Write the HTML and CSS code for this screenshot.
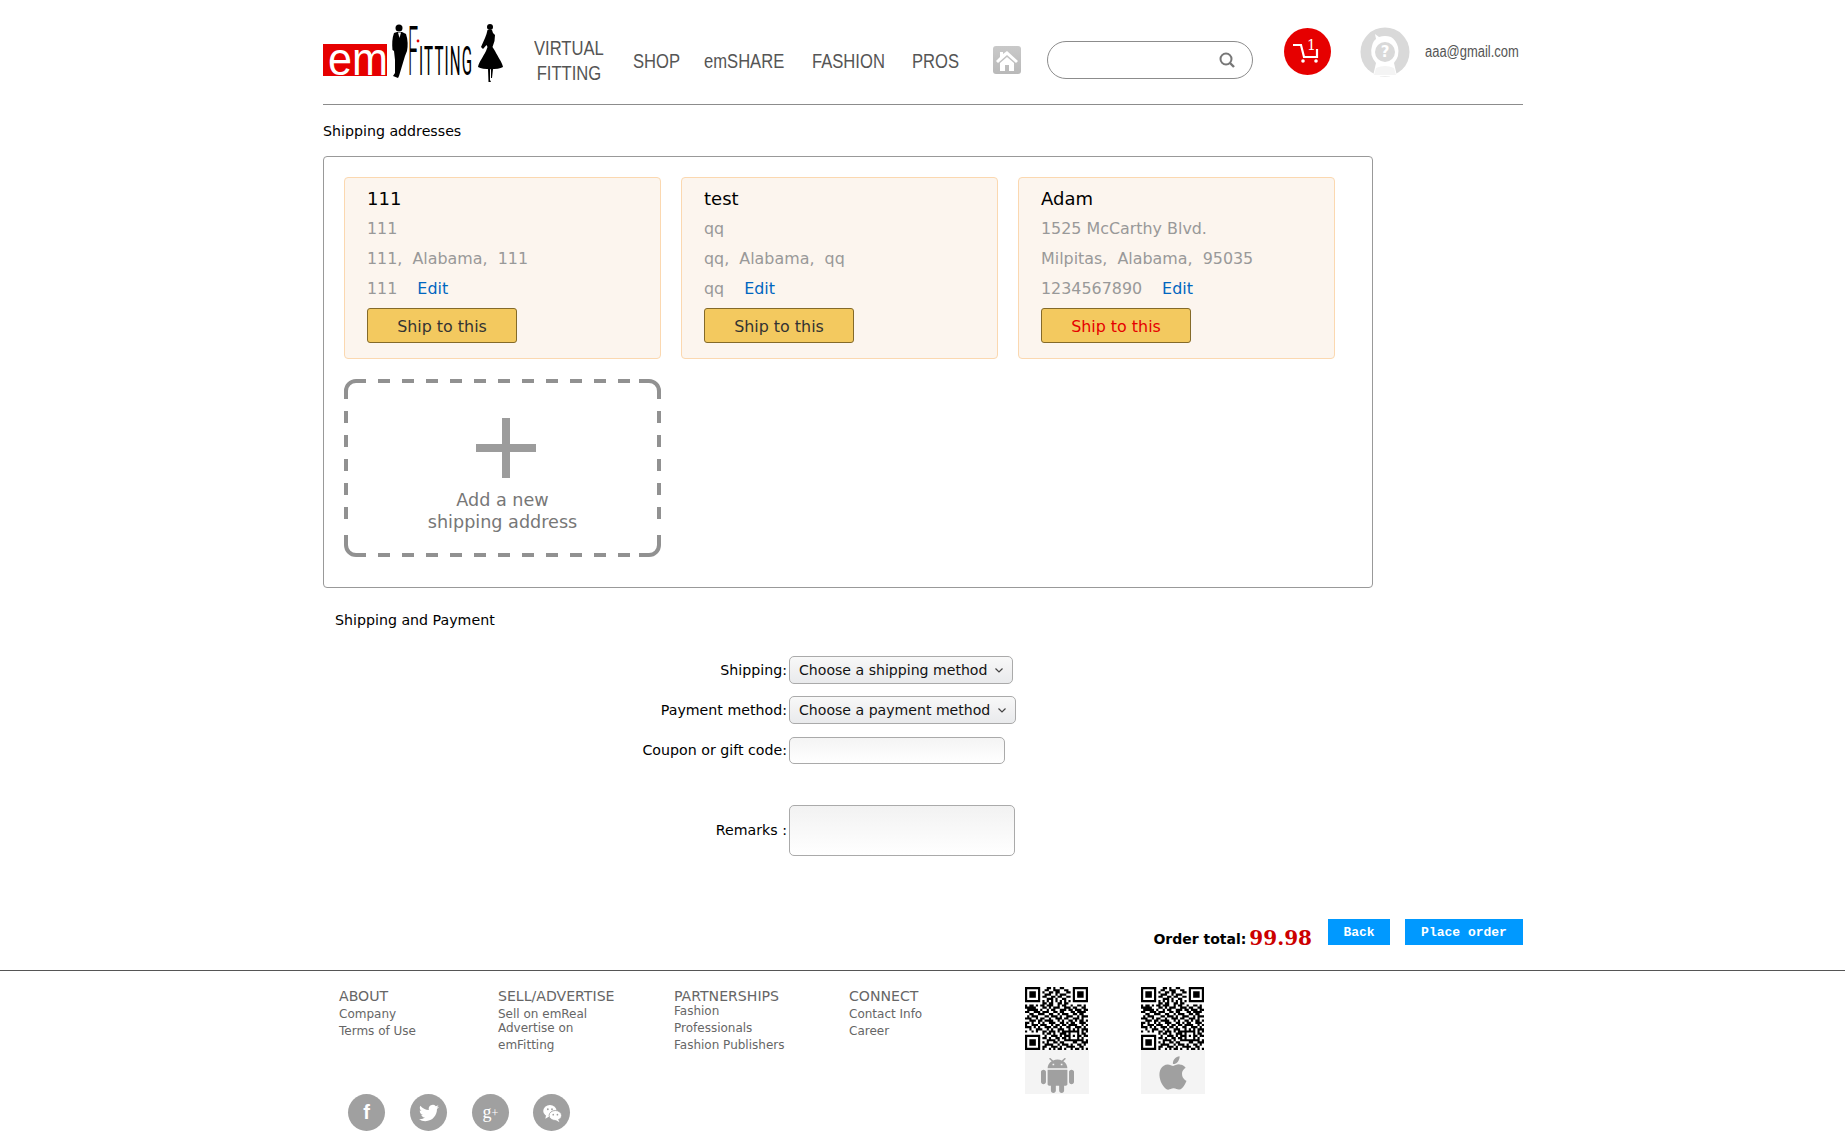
FILE: index.html
```html
<!DOCTYPE html>
<html lang="en">
<head>
    <meta charset="UTF-8">
    <meta name="viewport" content="width=device-width, initial-scale=1.0">
    <title>emFitting - Checkout</title>
    <link rel="stylesheet" href="styles.css">
</head>
<body>
    <svg class="defs" width="0" height="0">
        <symbol id="qr" viewBox="0 0 29 29"><path id="qrPath" d=""/></symbol>
    </svg>

    <div class="page">
        <header class="header">
            <a class="logo" href="#">
                <svg width="180" height="70" viewBox="0 0 180 70">
                    <rect x="0" y="24" width="64" height="32" fill="#e60000"/>
                    <text class="logo-em" x="5" y="55" textLength="60" lengthAdjust="spacingAndGlyphs">em</text>
                    <circle cx="76" cy="8" r="3.5"/>
                    <path d="M71 13L74 12L79 12L83 14C85 20 85 26 84 31L82 36L79 46L76 56L75 58L70 56L72 53L72 40L71 31L69.5 30C69 24 69 18 71 13Z"/>
                    <path d="M75 12.5L78 12.5L76.5 18Z" fill="#fff"/>
                    <text class="logo-f" transform="translate(85 55) scale(.26 1)">F</text>
                    <circle cx="95" cy="21" r="1.4" fill="#e60000"/>
                    <text class="logo-itting" transform="translate(96 55) scale(.38 1)">ITTING</text>
                    <circle cx="167" cy="7" r="3"/>
                    <path d="M164.5 10L169 10L170 13L172 15L171.5 21L169.5 27L172 31C175 37 179 42 180 47C175 50 160 50 155 47C156 42 160 37 163 31L164.5 27L163.5 25L160 29L158 27L162 18L163.5 14Z"/>
                    <path d="M165 49L167 49L167 60L168 62L165.5 62ZM168 49L170 49L169 58L168 58Z"/>
                </svg>
            </a>
            <nav class="nav">
                <a class="nav-wide" href="#"><span>VIRTUAL<br>FITTING</span></a>
                <a href="#"><span>SHOP</span></a>
                <a href="#"><span>emSHARE</span></a>
                <a href="#"><span>FASHION</span></a>
                <a href="#"><span>PROS</span></a>
            </nav>
            <a class="home" href="#">
                <svg width="28" height="28" viewBox="0 0 28 28">
                    <path d="M14 5L25 15L23 17L14 9L5 17L3 15L7 11L7 6L10 6L10 8Z" fill="#fff"/>
                    <path d="M7 17L14 11L21 17L21 25L16 25L16 19L12 19L12 25L7 25Z" fill="#fff"/>
                </svg>
            </a>
            <div class="search">
                <svg width="18" height="18" viewBox="0 0 18 18">
                    <circle cx="8" cy="8" r="5.5" fill="none" stroke="#777" stroke-width="2"/>
                    <path d="M12 12L16 16" stroke="#777" stroke-width="2.4"/>
                </svg>
            </div>
            <a class="cart" href="#">
                <svg width="47" height="47" viewBox="0 0 47 47">
                    <circle cx="23.5" cy="23.5" r="23.5" fill="#e60000"/>
                    <path d="M9 17L17 17L20 29L33 29L33 21" fill="none" stroke="#fff" stroke-width="2.2"/>
                    <circle cx="19" cy="33" r="1.8" fill="#fff"/>
                    <circle cx="32" cy="33" r="1.8" fill="#fff"/>
                    <text class="cart-count" x="23" y="22">1</text>
                </svg>
            </a>
            <a class="avatar" href="#">
                <svg width="50" height="50" viewBox="0 0 50 50">
                    <circle cx="25" cy="25" r="24.5" fill="#d9d9d9"/>
                    <path d="M15 7L19 10Q25 8 31 10Q36 13 38 20Q40 29 34 36L37 49L13 49L16 36Q9 28 12 19Q13 14 16 12Z" fill="#fff"/>
                    <circle cx="25" cy="25" r="10" fill="#d9d9d9"/>
                    <text class="avatar-mark" x="25" y="30">?</text>
                    <path d="M14 48L16 41Q25 37 34 41L36 48Z" fill="#f4f4f4"/>
                </svg>
            </a>
            <a class="email" href="#"><span>aaa@gmail.com</span></a>
        </header>

        <h2 class="section-title">Shipping addresses</h2>
        <div class="address-box">
            <div class="address-card">
                <div class="address-name">111</div>
                <div class="address-line">111</div>
                <div class="address-line">111,&nbsp; Alabama,&nbsp; 111</div>
                <div class="address-line">111<a class="edit" href="#">Edit</a></div>
                <button class="ship-btn">Ship to this</button>
            </div>
            <div class="address-card">
                <div class="address-name">test</div>
                <div class="address-line">qq</div>
                <div class="address-line">qq,&nbsp; Alabama,&nbsp; qq</div>
                <div class="address-line">qq<a class="edit" href="#">Edit</a></div>
                <button class="ship-btn">Ship to this</button>
            </div>
            <div class="address-card">
                <div class="address-name">Adam</div>
                <div class="address-line">1525 McCarthy Blvd.</div>
                <div class="address-line">Milpitas,&nbsp; Alabama,&nbsp; 95035</div>
                <div class="address-line">1234567890<a class="edit" href="#">Edit</a></div>
                <button class="ship-btn selected">Ship to this</button>
            </div>
            <a class="add-card" href="#">
                <span class="plus"></span>
                <span class="add-text">Add a new<br>shipping address</span>
            </a>
        </div>

        <h2 class="section-title payment-title">Shipping and Payment</h2>
        <form class="pay-form">
            <label>Shipping:</label>
            <select class="select-ship"><option>Choose a shipping method</option></select>
            <label>Payment method:</label>
            <select class="select-pay"><option>Choose a payment method</option></select>
            <label>Coupon or gift code:</label>
            <input class="coupon" type="text">
            <label class="remarks-label">Remarks :</label>
            <textarea class="remarks"></textarea>
        </form>

        <div class="order-row">
            <span class="order-label">Order total:</span>
            <span class="order-value">99.98</span>
            <button class="blue-btn back-btn">Back</button>
            <button class="blue-btn place-btn">Place order</button>
        </div>
    </div>

    <footer class="footer">
        <div class="footer-inner">
            <div class="footer-cols">
                <div class="footer-col">
                    <h4>ABOUT</h4>
                    <a href="#">Company</a>
                    <a href="#">Terms of Use</a>
                </div>
                <div class="footer-col">
                    <h4>SELL/ADVERTISE</h4>
                    <a href="#">Sell on emReal</a>
                    <a class="pull-up" href="#">Advertise on<br>emFitting</a>
                </div>
                <div class="footer-col">
                    <h4>PARTNERSHIPS</h4>
                    <a class="pull-up" href="#">Fashion</a>
                    <a href="#">Professionals</a>
                    <a href="#">Fashion Publishers</a>
                </div>
                <div class="footer-col">
                    <h4>CONNECT</h4>
                    <a href="#">Contact Info</a>
                    <a href="#">Career</a>
                </div>
                <div class="app-code">
                    <svg class="qr-img" viewBox="0 0 29 29"><use href="#qr"/></svg>
                    <div class="app-icon">
                        <svg class="android" width="33" height="35" viewBox="2 0 20 24" preserveAspectRatio="none" fill="#a0a0a0"><path d="M6 18c0 .55.45 1 1 1h1v3.5c0 .83.67 1.5 1.5 1.5s1.5-.67 1.5-1.5V19h2v3.5c0 .83.67 1.5 1.5 1.5s1.5-.67 1.5-1.5V19h1c.55 0 1-.45 1-1V8H6v10zM3.5 8C2.67 8 2 8.67 2 9.5v7c0 .83.67 1.5 1.5 1.5S5 17.33 5 16.5v-7C5 8.67 4.33 8 3.5 8zm17 0c-.83 0-1.5.67-1.5 1.5v7c0 .83.67 1.5 1.5 1.5s1.5-.67 1.5-1.5v-7c0-.83-.67-1.5-1.5-1.5zm-4.97-5.84l1.3-1.3c.2-.2.2-.51 0-.71-.2-.2-.51-.2-.71 0l-1.48 1.48C13.85 1.23 12.95 1 12 1c-.96 0-1.86.23-2.66.63L7.85.15c-.2-.2-.51-.2-.71 0-.2.2-.2.51 0 .71l1.31 1.31C6.97 3.26 6 5.01 6 7h12c0-1.99-.97-3.75-2.47-4.84zM10 5H9V4h1v1zm5 0h-1V4h1v1z"/></svg>
                    </div>
                </div>
                <div class="app-code">
                    <svg class="qr-img" viewBox="0 0 29 29"><use href="#qr"/></svg>
                    <div class="app-icon">
                        <svg class="apple" width="40" height="40" viewBox="0 0 24 24" fill="#a0a0a0"><path d="M18.71 19.5c-.83 1.24-1.71 2.45-3.05 2.47-1.34.03-1.77-.79-3.29-.79-1.53 0-2 .77-3.27.82-1.31.05-2.3-1.32-3.14-2.53C4.25 17 2.94 12.45 4.7 9.39c.87-1.52 2.43-2.48 4.12-2.51 1.28-.02 2.5.87 3.29.87.78 0 2.26-1.07 3.81-.91.65.03 2.47.26 3.64 1.98-.09.06-2.17 1.28-2.15 3.81.03 3.02 2.65 4.03 2.68 4.04-.03.07-.42 1.44-1.38 2.83M13 3.5c.73-.83 1.94-1.46 2.94-1.5.13 1.17-.34 2.35-1.04 3.19-.69.85-1.83 1.51-2.95 1.42-.15-1.15.41-2.35 1.05-3.11z"/></svg>
                    </div>
                </div>
            </div>
            <div class="social">
                <a class="social-item social-f" href="#">f</a>
                <a class="social-item" href="#">
                    <svg width="20" height="20" viewBox="0 0 24 24" fill="#fff"><path d="M23.953 4.57a10 10 0 01-2.825.775 4.958 4.958 0 002.163-2.723c-.951.555-2.005.959-3.127 1.184a4.92 4.92 0 00-8.384 4.482C7.69 8.095 4.067 6.13 1.64 3.162a4.822 4.822 0 00-.666 2.475c0 1.71.87 3.213 2.188 4.096a4.904 4.904 0 01-2.228-.616v.06a4.923 4.923 0 003.946 4.827 4.996 4.996 0 01-2.212.085 4.936 4.936 0 004.604 3.417 9.867 9.867 0 01-6.102 2.105c-.39 0-.779-.023-1.17-.067a13.995 13.995 0 007.557 2.209c9.053 0 13.998-7.496 13.998-13.985 0-.21 0-.42-.015-.63A9.935 9.935 0 0024 4.59z"/></svg>
                </a>
                <a class="social-item social-g" href="#">g<sup>+</sup></a>
                <a class="social-item social-last" href="#">
                    <svg width="20" height="20" viewBox="0 0 24 24">
                        <ellipse cx="9.5" cy="9.5" rx="8" ry="7" fill="#fff"/>
                        <path d="M5 14L4 19L9 16Z" fill="#fff"/>
                        <ellipse cx="16" cy="15" rx="7.5" ry="6" fill="#fff" stroke="#a0a0a0" stroke-width="1"/>
                        <path d="M19 19L21 23L16 20Z" fill="#fff"/>
                        <circle cx="7" cy="7.5" r="1.1" fill="#a0a0a0"/>
                        <circle cx="12" cy="7.5" r="1.1" fill="#a0a0a0"/>
                        <circle cx="13.5" cy="14" r="1" fill="#a0a0a0"/>
                        <circle cx="18.5" cy="14" r="1" fill="#a0a0a0"/>
                    </svg>
                </a>
            </div>
        </div>
    </footer>

    <script>
        // QR modules, one string per row
        const qrRows = [
            "11111110001101001100001111111",
            "10000010011001110011001000001",
            "10111010100110110001101011101",
            "10111010011100101110001011101",
            "10111010110011011001101011101",
            "10000010001110100110001000001",
            "11111110101010101010101111111",
            "00000000110110011011000000000",
            "10110101101110010110010011010",
            "11111000110101110011101100110",
            "01111101001011001110110111011",
            "11001110111001101100011011110",
            "00110011100110010111001101100",
            "01011100011011101001110010111",
            "11100101100100111011001110100",
            "00111011011110010100110101101",
            "11010010100111001101011001110",
            "10011101110010110110111100101",
            "11101010011101101001100111010",
            "00100111001010011100101010111",
            "10010100110111010111111110101",
            "00000000101101001110100010110",
            "11111110010011101011101011011",
            "10000010110100110110100010100",
            "10111010001111010011111111101",
            "10111010101001101100001100111",
            "10111010011110010111010011010",
            "10000010110011101001111001100",
            "11111110100101011010010110101"
        ];

        let qrPathData = '';
        qrRows.forEach((row, y) => {
            for (let x = 0; x < row.length; x++) {
                if (row[x] === '1') {
                    qrPathData += `M${x} ${y}h1v1h-1z`;
                }
            }
        });
        document.getElementById('qrPath').setAttribute('d', qrPathData);
    </script>
</body>
</html>
```

FILE: styles.css
```css
body {
    margin: 0;
    font-family: "DejaVu Sans", sans-serif;
    font-size: 14.2px;
    color: #000;
    background: #fff;
}
a {
    text-decoration: none;
}
.defs {
    display: block;
}
.page {
    width: 1200px;
    margin-left: 323px;
}

/* header */
.header {
    display: flex;
    align-items: flex-start;
    height: 104px;
    border-bottom: 1px solid #8c8c8c;
    font-family: "Liberation Sans", sans-serif;
}
.header > * {
    flex: none;
}
.logo {
    display: block;
    margin-top: 20px;
    width: 180px;
    height: 64px;
}
.logo svg {
    overflow: visible;
}
.logo-em {
    font-family: "Liberation Sans", sans-serif;
    font-size: 46px;
    fill: #fff;
}
.logo-f {
    font-family: Roboto, "Liberation Sans", sans-serif;
    font-size: 69px;
    font-weight: 300;
}
.logo-itting {
    font-family: Roboto, "Liberation Sans", sans-serif;
    font-size: 40px;
    font-weight: 400;
    letter-spacing: 3px;
}
.nav {
    display: grid;
    grid-template-columns: 99px 71px 108px 100px 47px;
    align-items: center;
    margin: 36px 0 0 31px;
    height: 50px;
}
.nav a {
    color: #555;
    font-size: 20px;
    line-height: 25px;
}
.nav span,
.email span {
    display: inline-block;
    white-space: nowrap;
    transform: scaleX(.83);
    transform-origin: 0 50%;
}
.email span {
    transform: scaleX(.81);
}
.nav .nav-wide span {
    text-align: center;
}
.home {
    display: block;
    width: 28px;
    height: 28px;
    margin: 46px 0 0 34px;
    border-radius: 3px;
    background: linear-gradient(#c9c9c9, #b9b9b9);
}
.home svg {
    display: block;
}
.search {
    display: flex;
    justify-content: flex-end;
    align-items: center;
    box-sizing: border-box;
    width: 206px;
    height: 38px;
    margin: 41px 0 0 26px;
    padding-right: 16px;
    border: 1px solid #8c8c8c;
    border-radius: 19px;
}
.cart {
    display: block;
    margin: 28px 0 0 31px;
    height: 47px;
}
.cart-count {
    font-family: "DejaVu Serif", serif;
    font-size: 14px;
    fill: #fff;
}
.avatar {
    display: block;
    margin: 27px 0 0 29px;
    height: 50px;
}
.avatar-mark {
    font-family: "DejaVu Sans", sans-serif;
    font-size: 15px;
    font-weight: bold;
    fill: #fff;
    text-anchor: middle;
}
.email {
    margin: 42px 0 0 15px;
    color: #555;
    font-size: 16px;
    line-height: 20px;
}

/* addresses */
.section-title {
    margin: 0;
    padding-top: 17px;
    font-size: 14.2px;
    font-weight: normal;
    line-height: 18px;
}
.address-box {
    display: flex;
    flex-wrap: wrap;
    align-content: flex-start;
    gap: 20px;
    box-sizing: border-box;
    width: 1050px;
    margin-top: 16px;
    padding: 20px 20px 30px;
    border: 1px solid #999;
    border-radius: 4px;
}
.address-card {
    box-sizing: border-box;
    width: 317px;
    height: 182px;
    padding: 6px 22px 0;
    border: 1px solid #fbd8b0;
    border-radius: 4px;
    background: #fcf5ee;
}
.address-name {
    font-size: 18px;
    line-height: 30px;
}
.address-line {
    color: #999;
    font-size: 15.9px;
    line-height: 30px;
}
.edit {
    margin-left: 20px;
    color: #0066c0;
}
.ship-btn {
    display: block;
    box-sizing: border-box;
    width: 150px;
    height: 35px;
    margin-top: 4px;
    padding: 2px 0 0;
    border: 1px solid #846a29;
    border-radius: 3px;
    background: #f3c95f;
    color: #333;
    font-family: inherit;
    font-size: 15.9px;
}
.ship-btn.selected {
    color: #e60000;
}
.add-card {
    display: flex;
    flex-direction: column;
    align-items: center;
    box-sizing: border-box;
    width: 317px;
    height: 178px;
    padding-top: 39px;
    background: url("data:image/svg+xml,%3Csvg xmlns='http://www.w3.org/2000/svg' width='317' height='178' fill='none' stroke='%23919191' stroke-width='4'%3E%3Cpath d='M2 20V12A10 10 0 0 1 12 2H22M295 2H305A10 10 0 0 1 315 12V20M315 156V166A10 10 0 0 1 305 176H295M22 176H12A10 10 0 0 1 2 166V156'/%3E%3Cpath stroke-dasharray='12 12' d='M34 2H286M34 176H286M2 32V140M315 32V140'/%3E%3C/svg%3E") no-repeat;
    color: #777;
}
.plus {
    width: 60px;
    height: 60px;
    margin-left: 7px;
    background:
        linear-gradient(#9c9c9c, #9c9c9c) center / 8px 100% no-repeat,
        linear-gradient(#9c9c9c, #9c9c9c) center / 100% 8px no-repeat;
}
.add-text {
    margin-top: 11px;
    font-size: 17.6px;
    line-height: 22px;
    text-align: center;
}

/* shipping and payment */
.payment-title {
    padding: 23px 0 0 12px;
}
.pay-form {
    display: grid;
    grid-template-columns: 464px auto;
    justify-content: start;
    justify-items: start;
    align-items: center;
    column-gap: 2px;
    row-gap: 12px;
    margin-top: 27px;
    font-size: 14.2px;
}
.pay-form label {
    justify-self: end;
    white-space: nowrap;
}
.pay-form select {
    appearance: none;
    box-sizing: border-box;
    height: 28px;
    padding-left: 9px;
    border: 1px solid #aaa;
    border-radius: 5px;
    background: url("data:image/svg+xml,%3Csvg xmlns='http://www.w3.org/2000/svg' width='8' height='5'%3E%3Cpath d='M.5.5L4 4L7.5.5' fill='none' stroke='%23444' stroke-width='1.2'/%3E%3C/svg%3E") right 9px center no-repeat, linear-gradient(#f8f8f8, #e9eaec);
    color: #111;
    font-family: inherit;
    font-size: 14.1px;
}
.select-ship {
    width: 224px;
}
.select-pay {
    width: 227px;
}
.coupon {
    box-sizing: border-box;
    width: 216px;
    height: 27px;
    margin-top: 1px;
    border: 1px solid #aaa;
    border-radius: 5px;
    background: linear-gradient(#f4f4f4, #fff);
}
.remarks-label {
    margin-top: 28px;
}
.remarks {
    display: block;
    box-sizing: border-box;
    width: 226px;
    height: 51px;
    margin-top: 29px;
    border: 1px solid #aaa;
    border-radius: 5px;
    background: linear-gradient(#f2f2f2, #fff);
    resize: none;
}

/* order total */
.order-row {
    display: flex;
    justify-content: flex-end;
    align-items: flex-start;
    margin-top: 63px;
    height: 51px;
}
.order-label {
    margin-top: 11px;
    font-size: 14px;
    font-weight: bold;
    line-height: 18px;
}
.order-value {
    margin: 6px 0 0 3px;
    color: #c00;
    font-family: "DejaVu Serif", serif;
    font-size: 20px;
    font-weight: bold;
    line-height: 26px;
}
.blue-btn {
    height: 26px;
    padding: 0;
    border: 0;
    background: #0099ff;
    color: #fff;
    font-family: "Liberation Mono", monospace;
    font-size: 13px;
    font-weight: bold;
}
.back-btn {
    width: 62px;
    margin-left: 16px;
}
.place-btn {
    width: 118px;
    margin-left: 15px;
}

/* footer */
.footer {
    border-top: 1px solid #555;
}
.footer-inner {
    width: 1200px;
    margin-left: 323px;
}
.footer-cols {
    display: grid;
    grid-template-columns: 159px 176px 175px 176px 116px 64px;
    padding: 16px 0 0 16px;
}
.footer-col {
    color: #666;
}
.footer-col h4 {
    margin: 0 0 1px;
    font-size: 14.1px;
    font-weight: normal;
    line-height: 18px;
}
.footer-col a {
    display: block;
    color: #666;
    font-size: 12px;
    line-height: 17px;
}
.footer-col .pull-up {
    margin-top: -3px;
}
.app-code {
    width: 64px;
}
.qr-img {
    display: block;
    width: 63px;
    height: 63px;
}
.app-icon {
    display: flex;
    justify-content: center;
    align-items: center;
    height: 44px;
    background: #f4f4f4;
}
.android {
    margin-top: 7px;
}
.apple {
    margin-top: 2px;
}
.social {
    display: flex;
    gap: 25px;
    padding-left: 25px;
}
.social-item {
    display: flex;
    justify-content: center;
    align-items: center;
    width: 37px;
    height: 37px;
    border-radius: 50%;
    background: #a0a0a0;
    color: #fff;
    font-family: "Liberation Serif", serif;
}
.social-last {
    margin-left: -1px;
}
.social-f {
    font-family: "Liberation Sans", sans-serif;
    font-size: 20px;
    font-weight: bold;
}
.social-g {
    font-size: 18px;
}
.social-g sup {
    font-size: 12px;
    line-height: 0;
}
```
